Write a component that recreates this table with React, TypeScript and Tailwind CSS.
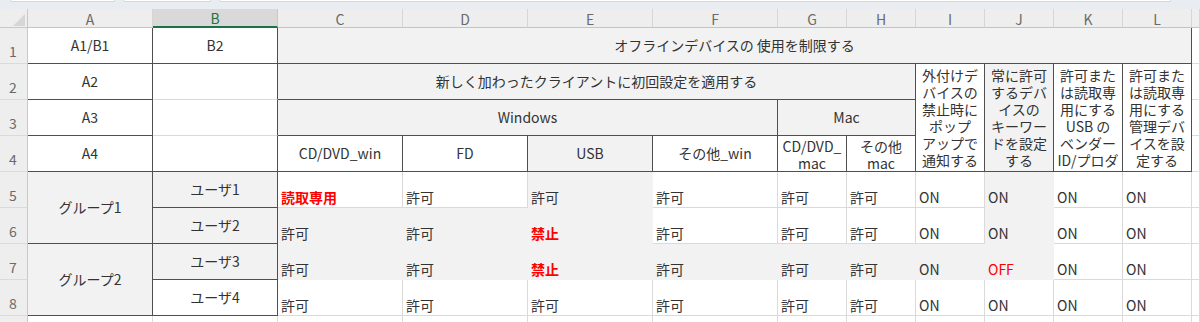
import type { ReactNode } from 'react';
import clsx from 'clsx';

type Fill = 'white' | 'gray';
type Edge = 'dark' | 'light' | 'none';

const FILL: Record<Fill, string> = {
    white: 'bg-white',
    gray: 'bg-[#f2f2f2]',
};

const RIGHT: Record<Edge, string> = {
    dark: 'border-r-[#4f4f4f]',
    light: 'border-r-[#dadada]',
    none: 'border-r-transparent',
};

const BOTTOM: Record<Edge, string> = {
    dark: 'border-b-[#4f4f4f]',
    light: 'border-b-[#dadada]',
    none: 'border-b-transparent',
};

// grid column classes for sheet columns A..M (col 1 is the row header)
const COL_START = [
    'col-start-2', 'col-start-3', 'col-start-4', 'col-start-5', 'col-start-6', 'col-start-7',
    'col-start-8', 'col-start-9', 'col-start-10', 'col-start-11', 'col-start-12', 'col-start-13', 'col-start-14',
];
const ROW_START = [
    'row-start-2', 'row-start-3', 'row-start-4', 'row-start-5', 'row-start-6',
    'row-start-7', 'row-start-8', 'row-start-9', 'row-start-10',
];

const LETTERS = ['A', 'B', 'C', 'D', 'E', 'F', 'G', 'H', 'I', 'J', 'K', 'L', ''];

interface CellProps {
    at: string;
    fill?: Fill;
    r?: Edge;
    b?: Edge;
    className?: string;
    children?: ReactNode;
}

const Cell = ({ at, fill = 'white', r, b, className, children }: CellProps) => {
    const fallback: Edge = fill === 'gray' ? 'none' : 'light';
    return (
        <div
            className={clsx(
                'border-r border-b overflow-hidden min-w-0',
                at,
                FILL[fill],
                RIGHT[r ?? fallback],
                BOTTOM[b ?? fallback],
                className
            )}
        >
            {children}
        </div>
    );
};

// centred header text
const Center = ({ children }: { children: ReactNode }) => (
    <div className="h-full flex items-center justify-center text-center whitespace-nowrap">{children}</div>
);

// wrapped header text, one entry per line
const Lines = ({ lines }: { lines: string[] }) => (
    <div className="h-full flex flex-col items-center justify-center leading-[17px]">
        {lines.map((line, i) => (
            <div key={i} className="w-full text-center whitespace-nowrap">{line}</div>
        ))}
    </div>
);

type DataCell = { text: string; fill: Fill; red?: boolean; bold?: boolean };

const w = (text: string, red = false, bold = false): DataCell => ({ text, fill: 'white', red, bold });
const g = (text: string, red = false, bold = false): DataCell => ({ text, fill: 'gray', red, bold });

// rows 5..8, columns C..L
const DATA: DataCell[][] = [
    [w('読取専用', true, true), w('許可'), g('許可'), w('許可'), w('許可'), w('許可'), w('ON'), g('ON'), w('ON'), w('ON')],
    [g('許可'), g('許可'), g('禁止', true, true), w('許可'), w('許可'), w('許可'), w('ON'), g('ON'), w('ON'), w('ON')],
    [g('許可'), g('許可'), g('禁止', true, true), g('許可'), g('許可'), g('許可'), g('ON'), g('OFF', true), w('ON'), w('ON')],
    [w('許可'), w('許可'), w('許可'), w('許可'), w('許可'), w('許可'), w('ON'), w('ON'), w('ON'), w('ON')],
];

const USERS: { name: string; fill: Fill }[] = [
    { name: 'ユーザ1', fill: 'gray' },
    { name: 'ユーザ2', fill: 'gray' },
    { name: 'ユーザ3', fill: 'gray' },
    { name: 'ユーザ4', fill: 'white' },
];

const App = () => {
    return (
        <div
            className="w-[1200px] h-[322px] overflow-hidden bg-white text-[14px] text-[#333] flex flex-col"
            style={{ fontFamily: '"Noto Sans CJK JP", "Noto Sans", sans-serif' }}
        >
            {/* name box / formula bar edges */}
            <div className="h-[9px] shrink-0 bg-[#e9ecf0] flex gap-[27px] pl-[10px]">
                <div className="w-[105px] h-[2px] bg-white border-b border-x border-[#d3d6db] rounded-b-[3px]" />
                <div className="w-[88px] h-[2px] bg-white border-b border-x border-[#d3d6db] rounded-b-[3px] -ml-[19px]" />
                <div className="w-[952px] h-[2px] bg-white border-b border-x border-[#d3d6db] rounded-b-[3px] -ml-[19px]" />
            </div>

            <div className="grid grid-cols-[28px_125px_125px_125px_125px_125px_125px_69px_69px_69px_69px_69px_69px_1fr] grid-rows-[19px_repeat(9,36px)]">
                {/* corner */}
                <div className="col-start-1 row-start-1 bg-[#eeeeee] border-r border-b border-[#c8c8c8] flex items-end justify-end pr-[2px] pb-[1px]">
                    <svg width="12" height="12" viewBox="0 0 12 12">
                        <polygon points="12,0 12,12 0,12" fill="#d6d6d6" />
                    </svg>
                </div>

                {/* column letters */}
                {LETTERS.map((letter, i) => (
                    <div
                        key={i}
                        className={clsx(
                            COL_START[i],
                            'row-start-1 border-b flex items-center justify-center text-[14px] leading-none pt-[1px]',
                            letter === 'B'
                                ? 'bg-[#d9d9d9] text-[#1e7145] border-b-2 border-b-[#1e7145] border-r border-r-[#c8c8c8]'
                                : 'bg-[#eeeeee] text-[#6a6a6a] border-b-[#c4c4c4] border-r border-r-[#d6d6d6]'
                        )}
                    >
                        {letter}
                    </div>
                ))}

                {/* row numbers; row 9 sits below the fold, so only its header strip shows */}
                {[1, 2, 3, 4, 5, 6, 7, 8, 9].map((n, i) => (
                    <div
                        key={n}
                        className={clsx(
                            ROW_START[i],
                            'col-start-1 bg-[#eeeeee] border-r border-r-[#c8c8c8] border-b border-b-[#dadada] flex items-end pl-[9px] pb-[1px] text-[14px] text-[#6a6a6a]'
                        )}
                    >
                        {n < 9 ? n : null}
                    </div>
                ))}

                {/* header block */}
                <Cell at="col-start-2 row-start-2" r="dark" b="dark"><Center>A1/B1</Center></Cell>
                <Cell at="col-start-3 row-start-2" r="dark" b="dark"><Center>B2</Center></Cell>
                <Cell at="col-start-4 col-span-10 row-start-2" fill="gray" r="dark" b="dark">
                    <Center>オフラインデバイスの 使用を制限する</Center>
                </Cell>

                <Cell at="col-start-2 row-start-3" r="dark" b="dark"><Center>A2</Center></Cell>
                <Cell at="col-start-3 row-start-3" r="dark" b="light" />
                <Cell at="col-start-4 col-span-6 row-start-3" fill="gray" r="dark" b="dark">
                    <Center>新しく加わったクライアントに初回設定を適用する</Center>
                </Cell>
                <Cell at="col-start-10 row-start-3 row-span-3" r="dark" b="dark">
                    <Lines lines={['外付けデ', 'バイスの', '禁止時に', 'ポップ', 'アップで', '通知する']} />
                </Cell>
                <Cell at="col-start-11 row-start-3 row-span-3" fill="gray" r="dark" b="dark">
                    <Lines lines={['常に許可', 'するデバ', 'イスの', 'キーワー', 'ドを設定', 'する']} />
                </Cell>
                <Cell at="col-start-12 row-start-3 row-span-3" r="dark" b="dark">
                    <Lines lines={['許可また', 'は読取専', '用にする', 'USB の', 'ベンダー', 'ID/プロダ']} />
                </Cell>
                <Cell at="col-start-13 row-start-3 row-span-3" r="dark" b="dark">
                    <Lines lines={['許可また', 'は読取専', '用にする', '管理デバ', 'イスを設', '定する']} />
                </Cell>

                <Cell at="col-start-2 row-start-4" r="dark" b="dark"><Center>A3</Center></Cell>
                <Cell at="col-start-3 row-start-4" r="dark" b="light" />
                <Cell at="col-start-4 col-span-4 row-start-4" fill="gray" r="dark" b="dark"><Center>Windows</Center></Cell>
                <Cell at="col-start-8 col-span-2 row-start-4" fill="gray" r="dark" b="dark"><Center>Mac</Center></Cell>

                <Cell at="col-start-2 row-start-5" r="dark" b="dark"><Center>A4</Center></Cell>
                <Cell at="col-start-3 row-start-5" r="dark" b="dark" />
                <Cell at="col-start-4 row-start-5" r="dark" b="dark"><Center>CD/DVD_win</Center></Cell>
                <Cell at="col-start-5 row-start-5" r="dark" b="dark"><Center>FD</Center></Cell>
                <Cell at="col-start-6 row-start-5" fill="gray" r="dark" b="dark"><Center>USB</Center></Cell>
                <Cell at="col-start-7 row-start-5" r="dark" b="dark"><Center>その他_win</Center></Cell>
                <Cell at="col-start-8 row-start-5" r="dark" b="dark" className="pt-[2px]">
                    <Lines lines={['CD/DVD_', 'mac']} />
                </Cell>
                <Cell at="col-start-9 row-start-5" r="dark" b="dark" className="pt-[2px]">
                    <Lines lines={['その他', 'mac']} />
                </Cell>

                {/* groups and users */}
                <Cell at="col-start-2 row-start-6 row-span-2" fill="gray" r="dark" b="dark"><Center>グループ1</Center></Cell>
                <Cell at="col-start-2 row-start-8 row-span-2" fill="gray" r="dark" b="dark"><Center>グループ2</Center></Cell>
                {USERS.map((u, i) => (
                    <Cell key={u.name} at={clsx('col-start-3', ROW_START[i + 4])} fill={u.fill} r="dark" b="dark">
                        <Center>{u.name}</Center>
                    </Cell>
                ))}

                {/* settings values */}
                {DATA.map((row, ri) =>
                    row.map((c, ci) => (
                        <Cell key={`${ri}-${ci}`} at={clsx(COL_START[ci + 2], ROW_START[ri + 4])} fill={c.fill}>
                            <div
                                className={clsx(
                                    'h-full flex items-end pl-[3px] pb-[1px] leading-[17px] whitespace-nowrap',
                                    c.red && 'text-[#ff0000]',
                                    c.bold && 'font-bold'
                                )}
                            >
                                {c.text}
                            </div>
                        </Cell>
                    ))
                )}

                {/* column M */}
                {ROW_START.slice(0, 8).map((rs) => (
                    <Cell key={rs} at={clsx('col-start-14', rs)} />
                ))}

                {/* row 9 */}
                {COL_START.map((cs) => (
                    <Cell key={cs} at={clsx(cs, 'row-start-10')} />
                ))}
            </div>
        </div>
    );
};

export default App;
